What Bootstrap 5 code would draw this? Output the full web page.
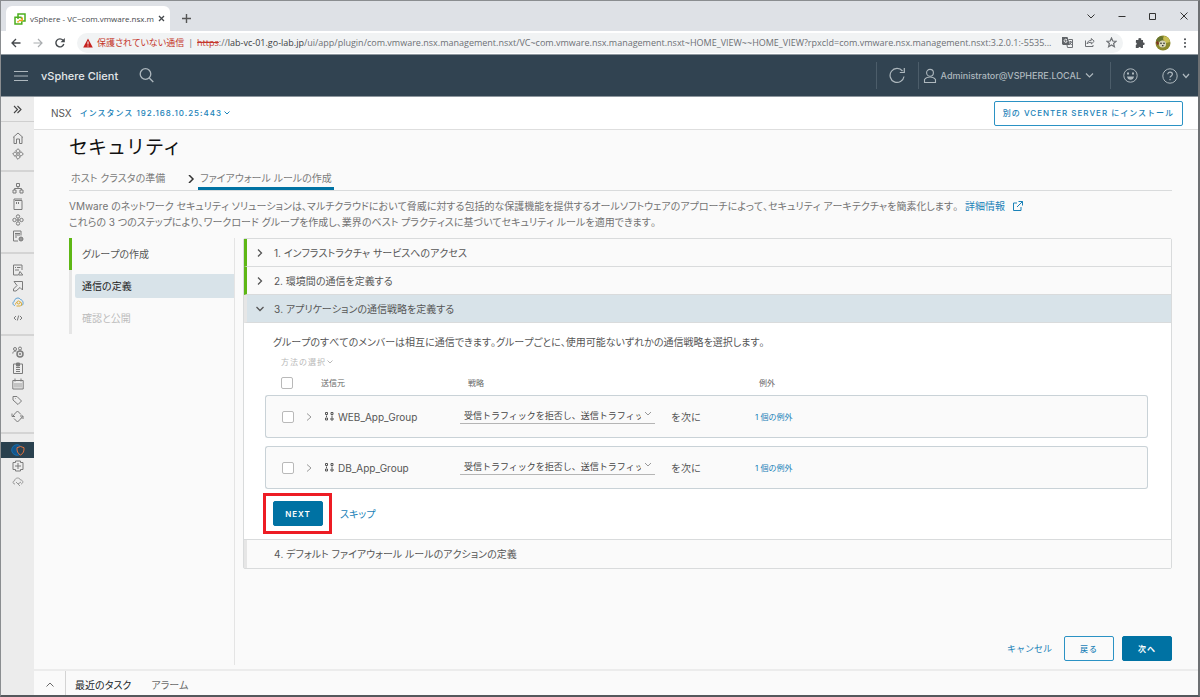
<!DOCTYPE html>
<html lang="ja">
<head>
<meta charset="utf-8">
<meta name="viewport" content="width=device-width, initial-scale=1">
<title>vSphere - VC~com.vmware.nsx.management</title>
<link href="https://cdn.jsdelivr.net/npm/bootstrap@5.3.0/dist/css/bootstrap.min.css" rel="stylesheet">
<style>
  :root { --ui: Inter, "Noto Sans CJK JP", sans-serif; --chrome: "Open Sans", "Noto Sans CJK JP", sans-serif; --blue: #0072a3; --line: #d9dbdc; }
  body { font-family: var(--ui); font-size: 10px; line-height: 16px; color: #565656; background: #fafafa; border: 1px solid #8a8d90; border-right: 2px solid #6d7073; border-bottom: 2px solid #55585c; }
  svg { display: block; flex: none; }
  svg:not([fill]) { fill: none; }
  svg:not([stroke]) { stroke: currentColor; }
  button { font-family: inherit; }
  .plain-btn { background: none; border: 0; padding: 0; color: inherit; line-height: inherit; }
  a { text-decoration: none; color: #1a82b8; }

  /* browser window */
  .tab-strip { background: #dee1e6; height: 30px; font-family: var(--chrome); font-size: 8px; }
  .page-tab { background: #fff; width: 164px; height: 25px; margin-left: 5px; border-radius: 6px 6px 0 0; padding: 0 8px; color: #45494d; }
  .page-tab-title { white-space: nowrap; }
  .window-btns { gap: 21px; padding-right: 9px; margin-bottom: 10px; color: #333; }
  .url-row { background: #fff; height: 23px; padding: 0 9px 0 10px; gap: 12px; font-family: var(--chrome); font-size: 9px; color: #45494d; }
  .url-pill { background: #f1f3f4; height: 20px; border-radius: 10px; padding: 0 6px; color: #6d7074; min-width: 0; }
  .url-text { overflow: hidden; white-space: nowrap; min-width: 0; }
  .pill-btns { gap: 11px; }
  .window-tools { gap: 10px; }
  .insecure { color: #c5372c; }
  .strong-host { color: #3c4043; }

  /* application header */
  .app-header { background: #314351; height: 43px; border-top: 1px solid #8e979e; border-bottom: 1px solid #8e979e; color: #aeb8be; font-size: 9px; padding-left: 13px; }
  .app-name { font-size: 11px; font-weight: 500; color: #e3e7ea; }
  .header-cell { border-left: 1px solid #4c5d6a; height: 27px; }

  /* left icon rail */
  .icon-rail { width: 33px; background: #ececec; color: #7b7b7b; }
  .rail-group { padding: 8px 0; border-bottom: 2px solid #d4d4d4; }
  .rail-group:last-child { border: 0; }
  .rail-item { display: flex; height: 16px; width: 100%; align-items: center; justify-content: center; color: inherit; }
  .rail-item.selected { background: #2a414f; }
  .rail-item.rail-toggle { height: 25px; border-bottom: 1px solid #cfcfcf; }

  .sub-header { background: #fff; height: 33px; border-bottom: 1px solid #dedede; padding: 0 15px 0 17px; }
  .tracked { font-size: 8px; letter-spacing: 1px; }
  .instance-btn { color: #1a82b8; gap: 2px; font-weight: 500; }
  .act-btn { --bs-btn-padding-y: 0px; --bs-btn-padding-x: 8px; --bs-btn-font-size: 8px; --bs-btn-border-radius: 2px; --bs-btn-color: #1a82b8; --bs-btn-border-color: #2b92c4; --bs-btn-hover-color: #fff; --bs-btn-hover-bg: #0072a3; min-width: 50px; height: 25px; line-height: 16px; letter-spacing: 1px; font-weight: 500; }
  .act-btn.filled { --bs-btn-bg: #0072a3; --bs-btn-color: #fff; --bs-btn-border-color: #0072a3; font-weight: 600; }

  .work-area { padding: 8px 26px 4px 35px; }
  .page-title { font-size: 19px; line-height: 20px; color: #111; margin: 0; font-weight: 400; }
  .step-tabs { border-bottom: 1px solid var(--line); margin-top: 9px; height: 24px; color: #7a7a7a; }
  .step-tabs a { color: #7a7a7a; padding: 3px 2px 0; }
  .step-tabs a.active { border-bottom: 3px solid var(--blue); }
  .step-tabs svg { margin: 8px 3px 0 20px; }
  .intro { color: #737373; margin: 7px 0 8px; }
  .snug { font-feature-settings: "palt"; font-kerning: none; }

  .wizard { width: 166px; border-right: 1px solid #e4e4e4; }
  .wizard a { display: flex; align-items: center; height: 32px; border-left: 3px solid #e6e6e6; padding: 4px 0 4px 3px; color: #565656; }
  .wizard a.done { border-left-color: #5eb715; }
  .wizard span { padding: 4px 7px; flex: 1; border-radius: 2px 0 0 2px; }
  .wizard a.current span { background: #d8e3e9; color: #222; }
  .wizard a.pending { color: #bcbcbc; }

  .steps { margin-left: 8px; min-width: 0; }
  .step-list { border: 1px solid var(--line); border-radius: 2px; }
  .step-head { display: flex; align-items: center; width: 100%; height: 28px; border: 0; border-bottom: 1px solid var(--line); border-left: 3px solid #e6e6e6; background: #fafafa; color: #565656; padding: 0 9px; gap: 10px; text-align: left; }
  .step-head.done { border-left-color: #5eb715; }
  .step-head.open { background: #d8e3e9; }
  .step-head.last { border-bottom: 0; padding-left: 27px; }
  .step-body { background: #fff; padding: 11px 23px 5px 21px; border-bottom: 1px solid var(--line); }
  .method-btn { color: #b8b8b8; gap: 1px; }

  .group-table { width: 100%; table-layout: fixed; border-collapse: separate; border-spacing: 0; }
  .group-table th { font-size: 8px; font-weight: 400; height: 25px; padding: 0; color: #666; }
  .group-table td { height: 43px; padding: 0; background: #fafafa; border: 1px solid #c9d2d7; border-width: 1px 0; }
  .group-table td:first-child { border-left-width: 1px; border-radius: 3px 0 0 3px; }
  .group-table td:last-child { border-right-width: 1px; border-radius: 0 3px 3px 0; }
  .group-table tbody + tbody::before { content: ""; display: block; height: 8px; }
  .col-pick { width: 56px; }
  .col-source { width: 139px; }
  .col-strategy { width: 295px; }
  .pick { appearance: none; display: block; width: 12px; height: 12px; margin: 0 0 0 16px; border: 1px solid #b9b9b9; border-radius: 2px; background: #fff; }
  .pick:checked { background: var(--blue); }
  .strategy { appearance: none; border: 0; border-bottom: 1px solid #b5b5b5; border-radius: 0; width: 195px; height: 15px; padding: 0 14px 0 4px; font: 9px/14px var(--ui); color: #444; background: url("data:image/svg+xml,%3Csvg xmlns='http://www.w3.org/2000/svg' width='8' height='6' fill='none' stroke='%23999'%3E%3Cpath d='M1 1l3 3 3-3'/%3E%3C/svg%3E") no-repeat right 3px top 2px; }
  .exception { font-size: 8px; }
  .callout-frame { border: 3px solid #ed1c24; padding: 5px 6px 5px 7px; margin-left: -2px; }
  .cancel-btn { color: #1a82b8; font-size: 9px; }

  .task-bar { height: 26px; border-top: 2px solid #ececec; gap: 20px; color: #6a6a6a; }
  .task-bar button { padding-top: 3px; }
  .task-toggle { width: 32px; border-right: 1px solid #d4d4d4; margin-right: -11px; }
</style>
</head>
<body class="d-flex flex-column min-vh-100">

<div class="tab-strip d-flex align-items-end">
  <div class="page-tab d-flex align-items-center gap-1">
    <svg width="12" height="12" viewBox="0 0 12 12" stroke-width="1.500"><path stroke="#4caf1e" d="M4 3.500V1h7v7H8.500M7.500 4.200H1V11h6.800V8.200M4 6V4M7.500 4.200V6"/><path stroke="#f5a11a" d="M4.700 7.600h3.500V4.500M3.300 8.700h1.500"/></svg>
    <span class="page-tab-title flex-fill">vSphere - VC~com.vmware.nsx.m</span>
    <button class="plain-btn" aria-label="タブを閉じる"><svg width="7" height="7" viewBox="0 0 7 7" stroke-width="1.300"><path d="M1 1l5 5M6 1L1 6"/></svg></button>
  </div>
  <button class="plain-btn ms-2 ps-1 pb-2" aria-label="新しいタブ"><svg width="9" height="9" viewBox="0 0 9 9" stroke-width="1.400"><path d="M4.500 0v9M0 4.500h9"/></svg></button>
  <div class="window-btns d-flex align-items-center ms-auto">
    <button class="plain-btn" aria-label="タブを検索"><svg width="10" height="10" viewBox="0 0 10 10"><path d="M1.500 3.500L5 7l3.500-3.500"/></svg></button>
    <button class="plain-btn" aria-label="最小化"><svg width="10" height="10" viewBox="0 0 10 10"><path d="M1.500 5.500h7"/></svg></button>
    <button class="plain-btn" aria-label="最大化"><svg width="10" height="10" viewBox="0 0 10 10"><path d="M1.500 2.500h6v6h-6z"/></svg></button>
    <button class="plain-btn" aria-label="閉じる"><svg width="10" height="10" viewBox="0 0 10 10"><path d="M1.500 1.500l7 7M8.500 1.500l-7 7"/></svg></button>
  </div>
</div>

<div class="url-row d-flex align-items-center">
  <button class="plain-btn" aria-label="戻る"><svg width="10" height="10" viewBox="0 0 10 10" stroke-width="1.300"><path d="M9.500 5H1M5 1L1 5l4 4"/></svg></button>
  <button class="plain-btn" aria-label="進む"><svg width="10" height="10" viewBox="0 0 10 10" stroke="#aaadb0" stroke-width="1.200"><path d="M.5 5H9M5 1l4 4-4 4"/></svg></button>
  <button class="plain-btn" aria-label="再読み込み"><svg width="10" height="10" viewBox="0 0 10 10" stroke-width="1.400"><path d="M8.800 6A4 4 0 1 1 8 2.300"/><path fill="currentColor" stroke="none" d="M9.800 0v4.300H5.500z"/></svg></button>
  <div class="url-pill d-flex align-items-center flex-fill">
    <svg class="me-1" width="10" height="10" viewBox="0 0 10 10" stroke="none"><path fill="#c5221f" d="M5 .5l4.800 9H.2z"/><path stroke="#fff" d="M5 3.500v3M5 7.500v1"/></svg>
    <span class="insecure snug text-nowrap">保護されていない通信</span><span class="mx-1" aria-hidden="true">|</span>
    <span class="url-text flex-fill"><s class="insecure">https</s>://<span class="strong-host">lab-vc-01.go-lab.jp</span>/ui/app/plugin/com.vmware.nsx.management.nsxt/VC~com.vmware.nsx.management.nsxt~HOME_VIEW~~HOME_VIEW?rpxcId=com.vmware.nsx.management.nsxt:3.2.0.1:-5535...</span>
    <span class="pill-btns d-flex ms-1">
      <button class="plain-btn" aria-label="翻訳"><svg width="11" height="11" viewBox="0 0 11 11"><path fill="#606468" stroke="none" d="M0 0h5.500L8 8H1L0 7z"/><path d="M6.500 2.500h4v8h-5L5 8M7 5h3M8.500 4v1M9.500 5L7.500 8M7.800 6l2 2"/><path stroke="#fff" stroke-width=".8" d="M5 2.800a1.600 1.600 0 1 0 0 2V4H3.700"/></svg></button>
      <button class="plain-btn" aria-label="共有"><svg width="11" height="11" viewBox="0 0 11 11"><path d="M1.500 3.500v6h7.500V8M3 7c.4-2.500 2-3.600 4.300-3.700V1.500L10.200 4.300 7.300 7V5.300C5.500 5.300 4 5.700 3 7z"/></svg></button>
      <button class="plain-btn" aria-label="ブックマーク"><svg width="11" height="11" viewBox="0 0 11 11" stroke-width="1.200"><path d="M5.500 1l1.300 3 3.300.3-2.500 2.200.8 3.200-2.900-1.700L2.600 9.700l.8-3.200L.9 4.300 4.200 4z"/></svg></button>
    </span>
  </div>
  <div class="window-tools d-flex align-items-center">
    <button class="plain-btn" aria-label="拡張機能"><svg width="10" height="10" viewBox="0 0 10 10" stroke="none" fill="#505356"><path d="M1 2h2.500a1.400 1.400 0 1 1 2.600 0H8v2.500a1.300 1.300 0 1 1 0 2.500v3H6a1.400 1.400 0 0 0-2.600 0H.8V7a1.300 1.300 0 0 0 0-2.500z"/></svg></button>
    <button class="plain-btn" aria-label="プロフィール"><svg width="16" height="16" viewBox="0 0 16 16" stroke="none"><circle cx="8" cy="8" r="7.500" fill="#8c8a2c"/><path fill="#66742e" d="M1 6a7 7 0 0 1 6-5l2 3-4 3z"/><path fill="#c8bd52" d="M9 1a7 7 0 0 1 6 6l-4 1-3-4z"/><circle cx="7.500" cy="9" r="3.600" fill="#d8d6b8"/><path fill="#7e3226" d="M1 7l2-1 1 3-2 1z"/><circle cx="6" cy="8.300" r=".8" fill="#222"/><circle cx="9" cy="8.300" r=".8" fill="#222"/><path fill="#333" d="M7 10h1.500v1.300H7z"/></svg></button>
    <button class="plain-btn" aria-label="メニュー"><svg width="8" height="10" viewBox="0 0 8 10" stroke="none" fill="currentColor"><circle cx="4" cy="1.300" r="1"/><circle cx="4" cy="5" r="1"/><circle cx="4" cy="8.700" r="1"/></svg></button>
  </div>
</div>

<header class="app-header d-flex align-items-center">
  <button class="plain-btn me-2" aria-label="メニュー"><svg width="15" height="12" viewBox="0 0 15 12"><path d="M0 1.500h14M0 6h14M0 10.500h14"/></svg></button>
  <span class="app-name ms-1">vSphere Client</span>
  <button class="plain-btn ms-3 ps-1" aria-label="検索"><svg width="17" height="17" viewBox="0 0 17 17" stroke-width="1.300"><circle cx="7.500" cy="7" r="5.300"/><path d="M11.300 11l4 4"/></svg></button>
  <div class="ms-auto d-flex align-items-center">
    <div class="header-cell d-flex align-items-center px-2"><button class="plain-btn mx-1" aria-label="更新"><svg width="17" height="17" viewBox="0 0 17 17" stroke-width="1.200"><path d="M15 9.500A7 7 0 1 1 13.500 4M15.300 1v4.500h-4.500"/></svg></button></div>
    <div class="header-cell d-flex align-items-center ps-1 pe-3"><button class="plain-btn d-flex align-items-center gap-1"><svg width="14" height="16" viewBox="0 0 14 16" stroke-width="1.100"><circle cx="7" cy="4.800" r="3.400"/><path d="M1.500 14.500v-3C3 9.400 5 9 7 9s4 .4 5.500 2.500v3z"/></svg><span class="fw-medium">Administrator@VSPHERE.LOCAL</span><svg width="9" height="9" viewBox="0 0 9 9" stroke-width="1.200"><path d="M1 2.500L4.500 6 8 2.500"/></svg></button></div>
    <div class="header-cell d-flex align-items-center ps-2"><button class="plain-btn ps-1 me-4" aria-label="フィードバック"><svg width="15" height="15" viewBox="0 0 15 15"><circle cx="7.500" cy="7.500" r="6.700"/><path fill="currentColor" stroke="none" d="M4 8.500h7c-.2 2-1.600 3.300-3.500 3.300S4.200 10.500 4 8.500zM4 4.500h2v2H4zM9 4.500h2v2H9z"/></svg></button>
      <button class="plain-btn d-flex align-items-center gap-1 me-2" aria-label="ヘルプ"><svg width="16" height="16" viewBox="0 0 16 16"><circle cx="8" cy="8" r="7.200"/><path stroke-width="1.200" d="M5.800 6.300c0-3 4.600-2.800 4.600 0C10.400 7.800 8 8 8 9.600M8 11v1.300"/></svg><svg width="8" height="8" viewBox="0 0 8 8" stroke-width="1.200"><path d="M1 2l3 3.500L7 2"/></svg></button></div>
  </div>
</header>

<div class="d-flex flex-fill">
  <nav class="icon-rail flex-shrink-0" aria-label="ナビゲーション">
    <button class="plain-btn rail-item rail-toggle" aria-label="展開"><svg width="9" height="9" viewBox="0 0 9 9" stroke="#444" stroke-width="1.100"><path d="M1 1l3.500 3.500L1 8M4.500 1L8 4.500 4.500 8"/></svg></button>
    <div class="rail-group">
      <a class="rail-item" href="#" aria-label="ホーム"><svg width="12" height="12" viewBox="0 0 12 12"><path d="M1 5.500L6 1l5 4.500M2 5v6.500h2.500V7h3v4.500H10V5"/></svg></a>
      <a class="rail-item" href="#" aria-label="ショートカット"><svg width="12" height="12" viewBox="0 0 12 12"><path d="M6 .7l2.300 2.300L6 5.300 3.700 3zM6 6.700l2.300 2.300L6 11.300 3.700 9zM3 3.700l2.300 2.300L3 8.300.7 6zM9 3.700l2.300 2.300L9 8.300 6.700 6z"/></svg></a>
    </div>
    <div class="rail-group">
      <a class="rail-item" href="#" aria-label="インベントリ"><svg width="12" height="12" viewBox="0 0 12 12"><path d="M4.500 1.500h3v3h-3zM1 8h3v3H1zM8 8h3v3H8zM6 4.500v2M2.500 8V6.500h7V8"/></svg></a>
      <a class="rail-item" href="#" aria-label="コンテンツ ライブラリ"><svg width="12" height="12" viewBox="0 0 12 12"><path d="M2 1v10.500h8V2.500H3M2 1h8M4.500 4v2M6.500 4v2"/></svg></a>
      <a class="rail-item" href="#" aria-label="ワークロード管理"><svg width="12" height="12" viewBox="0 0 12 12"><circle cx="6" cy="2.500" r="1.700"/><circle cx="6" cy="9.500" r="1.700"/><circle cx="2.500" cy="6" r="1.700"/><circle cx="9.500" cy="6" r="1.700"/><path d="M4.500 6h3M6 4.500v3"/></svg></a>
      <a class="rail-item" href="#" aria-label="グローバル インベントリ リスト"><svg width="12" height="12" viewBox="0 0 12 12"><path d="M6 11H1.500V1H9v4.500M3 3.500h5M3 5h5M3 7h2"/><circle cx="9" cy="9" r="2" fill="#999"/></svg></a>
    </div>
    <div class="rail-group">
      <a class="rail-item" href="#" aria-label="ポリシーおよびプロファイル"><svg width="12" height="12" viewBox="0 0 12 12"><path d="M6 11H1.500V1H10v5M3 3.500h1M5 3.500h3.500M3 6h4M8 7.500l2.800 3.500H6.500z"/></svg></a>
      <a class="rail-item" href="#" aria-label="Auto Deploy"><svg width="12" height="12" viewBox="0 0 12 12"><path d="M2 1.500h8.500V10L8 7.500 4 11H1.500V9L5 5.500z"/></svg></a>
      <a class="rail-item" href="#" aria-label="ハイブリッド クラウド サービス"><svg width="12" height="12" viewBox="0 0 12 12"><path stroke="#5b9fd0" d="M3 9.500C.5 9.500.3 6 2.200 5.500 2.500 2 7 .8 8.500 3.500 11.500 4 12 9 9.500 9.500"/><circle cx="6.500" cy="6.500" r="1.500" stroke="#d9aa33"/><path stroke="#d9aa33" d="M3.500 8.500C3.500 7 4 6.500 5 6.500M8 6c1.500 0 2 1.500 1.500 3L8.500 10H4.500"/></svg></a>
      <a class="rail-item" href="#" aria-label="デベロッパー センター"><svg width="10" height="10" viewBox="0 0 10 10"><path d="M3 3L1 5l2 2M7 3l2 2-2 2M5.700 2.500l-1.400 5"/></svg></a>
    </div>
    <div class="rail-group">
      <a class="rail-item" href="#" aria-label="管理"><svg width="12" height="12" viewBox="0 0 12 12"><circle cx="3" cy="3" r="1.500"/><circle cx="8" cy="2.500" r="1.500"/><path d="M.8 7.500C1 5.500 2 5 4.500 5"/><circle cx="8" cy="8" r="3" stroke-width="1.500"/><circle cx="8" cy="8" r=".8"/></svg></a>
      <a class="rail-item" href="#" aria-label="タスク"><svg width="12" height="12" viewBox="0 0 12 12"><path d="M4 2H1.500v9.500h9V2H8M4 5.500h4M4 7.500h4M4 9.500h4"/><path fill="currentColor" d="M4.500 1h3v3h-3z"/></svg></a>
      <a class="rail-item" href="#" aria-label="イベント"><svg width="12" height="12" viewBox="0 0 12 12"><path d="M.8 2.500h10.400v8.500H.8zM3 .5v3M9 .5v3"/><path stroke-width=".7" d="M3 5v4.500M5 5v4.500M7 5v4.500M9 5v4.500"/></svg></a>
      <a class="rail-item" href="#" aria-label="タグとカスタム属性"><svg width="11" height="11" viewBox="0 0 11 11"><path d="M1 1.500h4L9.500 6 6 9.500 1 5zM3 3.500h.5"/></svg></a>
      <a class="rail-item" href="#" aria-label="Lifecycle Manager"><svg width="13" height="13" viewBox="0 0 13 13"><path d="M3 4.500L6.500 1 10 4.500M3 8.500L6.500 12 10 8.500M1 3.500v3h3M12 9V6H9M1.500 6.500L3.500 4.500M11.500 6.500l-2 2.500"/></svg></a>
    </div>
    <div class="rail-group">
      <a class="rail-item selected" href="#" aria-label="NSX"><svg width="14" height="12" viewBox="0 0 14 12"><circle cx="6" cy="6" r="5.300" fill="#12568c" stroke="#1a6dab"/><path stroke="#e2713e" fill="#2a414f" d="M9.500 2.500L13 3.700C13.200 7 12.500 9.500 9.500 11 6.500 9.500 5.800 7 6 3.700z"/></svg></a>
      <a class="rail-item" href="#" aria-label="プラグイン"><svg width="12" height="12" viewBox="0 0 12 12"><path d="M3.500 1h5v1.500H11v7H8.500V11h-5V9.500H1v-7h2.500zM6 3v6M3 6h6"/></svg></a>
      <a class="rail-item" href="#" aria-label="クラウド"><svg width="12" height="12" viewBox="0 0 12 12" stroke="#999"><path d="M3 8C.5 8 .5 5 2.500 4.800 3 1.500 7.500 1 8.500 4c3 0 3 3.500.5 4M4 6l2 2 3-2M6 8l2 2"/></svg></a>
    </div>
  </nav>

  <div class="d-flex flex-column flex-fill">
    <div class="sub-header d-flex align-items-center">
      <span>NSX</span>
      <button class="plain-btn instance-btn tracked d-flex align-items-center ms-2"><span>インスタンス 192.168.10.25:443</span><svg width="6" height="6" viewBox="0 0 6 6"><path d="M.5 1.500L3 4l2.500-2.500"/></svg></button>
      <button class="btn act-btn ms-auto">別の VCENTER SERVER にインストール</button>
    </div>

    <main class="work-area d-flex flex-column flex-fill">
      <h1 class="page-title">セキュリティ</h1>
      <nav class="step-tabs d-flex snug">
        <a href="#">ホスト クラスタの準備</a>
        <svg width="8" height="8" viewBox="0 0 8 8" stroke="#333" stroke-width="1.500"><path d="M2 0l4 4-4 4"/></svg>
        <a class="active" href="#">ファイアウォール ルールの作成</a>
      </nav>
      <p class="intro snug">VMware のネットワーク セキュリティ ソリューションは、マルチクラウドにおいて脅威に対する包括的な保護機能を提供するオールソフトウェアのアプローチによって、セキュリティ アーキテクチャを簡素化します。 <a class="d-inline-flex align-items-center gap-2 ms-1" href="#">詳細情報 <svg width="10" height="10" viewBox="0 0 10 10"><path d="M4 2H.5v7.500H8V6M5.500.5h4v4M9.500.5L4 6"/></svg></a><br>これらの 3 つのステップにより、ワークロード グループを作成し、業界のベスト プラクティスに基づいてセキュリティ ルールを適用できます。</p>

      <div class="d-flex flex-fill">
        <nav class="wizard flex-shrink-0 snug">
          <a class="done" href="#"><span>グループの作成</span></a>
          <a class="current" href="#"><span>通信の定義</span></a>
          <a class="pending" href="#"><span>確認と公開</span></a>
        </nav>
        <section class="steps d-flex flex-column flex-fill">
          <div class="step-list">
            <button class="step-head done snug"><svg width="8" height="8" viewBox="0 0 8 8" stroke-width="1.300"><path d="M2 .5L5.500 4 2 7.500"/></svg><span>1. インフラストラクチャ サービスへのアクセス</span></button>
            <button class="step-head done snug"><svg width="8" height="8" viewBox="0 0 8 8" stroke-width="1.300"><path d="M2 .5L5.500 4 2 7.500"/></svg><span>2. 環境間の通信を定義する</span></button>
            <button class="step-head open snug" aria-expanded="true"><svg width="8" height="8" viewBox="0 0 8 8" stroke-width="1.300"><path d="M.5 2L4 5.500 7.500 2"/></svg><span>3. アプリケーションの通信戦略を定義する</span></button>
            <div class="step-body">
              <p class="mb-1 ms-2 snug">グループのすべてのメンバーは相互に通信できます。グループごとに、使用可能ないずれかの通信戦略を選択します。</p>
              <button class="plain-btn method-btn tracked d-flex align-items-center ms-3" disabled>方法の選択<svg width="6" height="6" viewBox="0 0 6 6"><path d="M.5 1.500L3 4l2.500-2.500"/></svg></button>
              <table class="group-table">
                <colgroup><col class="col-pick"><col class="col-source"><col class="col-strategy"><col></colgroup>
                <thead><tr>
                  <th><input class="pick" type="checkbox" aria-label="すべて選択"></th>
                  <th>送信元</th><th><span class="ms-2">戦略</span></th><th><span class="ms-1">例外</span></th>
                </tr></thead>
                <tbody><tr>
                  <td><div class="d-flex align-items-center"><input class="pick" type="checkbox" aria-label="WEB_App_Group"><button class="plain-btn ms-2 ps-1" aria-label="展開"><svg width="8" height="8" viewBox="0 0 8 8" stroke="#999"><path d="M1 .5L5 4 1 7.500"/></svg></button></div></td>
                  <td><div class="d-flex align-items-center gap-1 ps-1"><svg width="9" height="9" viewBox="0 0 9 9"><path d="M.5.5h2v2h-2zM6 .5h2v2H6zM.5 6h2v2h-2zM6 6h2v2H6zM1.500 3.500v1.500M7 3.500v1.500"/></svg>WEB_App_Group</div></td>
                  <td><div class="d-flex align-items-center gap-3"><select class="strategy" aria-label="WEB_App_Group の戦略"><option>受信トラフィックを拒否し、送信トラフィックを許可</option></select>を次に</div></td>
                  <td><a class="exception" href="#">1 個の例外</a></td>
                </tr></tbody>
                <tbody><tr>
                  <td><div class="d-flex align-items-center"><input class="pick" type="checkbox" aria-label="DB_App_Group"><button class="plain-btn ms-2 ps-1" aria-label="展開"><svg width="8" height="8" viewBox="0 0 8 8" stroke="#999"><path d="M1 .5L5 4 1 7.500"/></svg></button></div></td>
                  <td><div class="d-flex align-items-center gap-1 ps-1"><svg width="9" height="9" viewBox="0 0 9 9"><path d="M.5.5h2v2h-2zM6 .5h2v2H6zM.5 6h2v2h-2zM6 6h2v2H6zM1.500 3.500v1.500M7 3.500v1.500"/></svg>DB_App_Group</div></td>
                  <td><div class="d-flex align-items-center gap-3"><select class="strategy" aria-label="DB_App_Group の戦略"><option>受信トラフィックを拒否し、送信トラフィックを許可</option></select>を次に</div></td>
                  <td><a class="exception" href="#">1 個の例外</a></td>
                </tr></tbody>
              </table>
              <div class="d-flex align-items-center gap-2 mt-1">
                <div class="callout-frame"><button class="btn act-btn filled d-block">NEXT</button></div>
                <a class="snug" href="#">スキップ</a>
              </div>
            </div>
            <button class="step-head last snug"><span>4. デフォルト ファイアウォール ルールのアクションの定義</span></button>
          </div>
          <div class="d-flex align-items-center justify-content-end gap-2 mt-auto mb-1">
            <button class="plain-btn cancel-btn me-1">キャンセル</button>
            <button class="btn act-btn">戻る</button>
            <button class="btn act-btn filled">次へ</button>
          </div>
        </section>
      </div>
    </main>

    <footer class="task-bar d-flex align-items-stretch">
      <button class="plain-btn task-toggle d-flex align-items-center justify-content-center" aria-label="開く"><svg width="8" height="8" viewBox="0 0 8 8"><path d="M.5 5.500L4 2l3.500 3.500"/></svg></button>
      <button class="plain-btn text-dark snug">最近のタスク</button>
      <button class="plain-btn snug">アラーム</button>
    </footer>
  </div>
</div>

<script src="https://cdn.jsdelivr.net/npm/bootstrap@5.3.0/dist/js/bootstrap.bundle.min.js"></script>
</body>
</html>
